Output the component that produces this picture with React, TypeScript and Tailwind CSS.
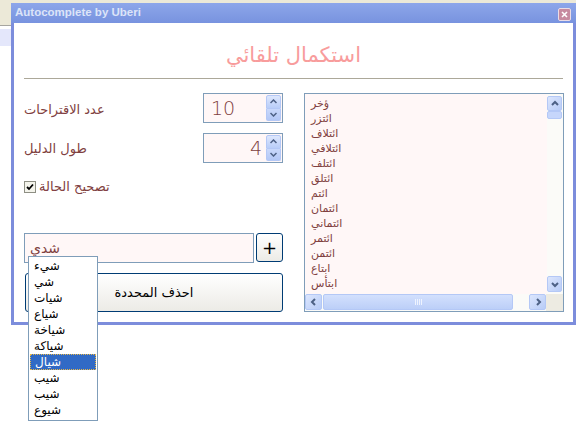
import React from 'react';

const ar = "font-['DejaVu_Sans','Noto_Sans',sans-serif]";

const listItems = [
  'ؤخر',
  'ائتزر',
  'ائتلاف',
  'ائتلافي',
  'ائتلف',
  'ائتلق',
  'ائتم',
  'ائتمان',
  'ائتماني',
  'ائتمر',
  'ائتمن',
  'ابتاع',
  'ابتأس',
];

const suggestions = ['شيء', 'شي', 'شيات', 'شياع', 'شياخة', 'شياكة', 'شيال', 'شيب', 'شيب', 'شيوع'];

function Arrow({ dir }: { dir: 'up' | 'down' | 'left' | 'right' }) {
  const d = {
    up: 'M2 6 L5 3 L8 6',
    down: 'M2 4 L5 7 L8 4',
    left: 'M6 2 L3 5 L6 8',
    right: 'M4 2 L7 5 L4 8',
  }[dir];
  return (
    <svg width="10" height="10" viewBox="0 0 10 10">
      <path d={d} fill="none" stroke="#4D6185" strokeWidth="2" />
    </svg>
  );
}

function ScrollBtn({ dir, className }: { dir: 'up' | 'down' | 'left' | 'right'; className: string }) {
  return (
    <div
      className={`flex items-center justify-center rounded-[2px] border border-[#B4C8F6] bg-gradient-to-br from-[#DCE6FD] to-[#B8CCF7] ${className}`}
    >
      <Arrow dir={dir} />
    </div>
  );
}

function SpinButtons() {
  return (
    <div className="flex flex-col w-[15px] h-[26px] my-px mr-px">
      <div className="flex-1 flex items-center justify-center rounded-t-[2px] border border-[#B4C8F6] bg-gradient-to-b from-[#DDE7FD] to-[#B9CDF8]">
        <svg width="7" height="5" viewBox="0 0 7 5">
          <path d="M0.5 4 L3.5 1 L6.5 4" fill="none" stroke="#4D6185" strokeWidth="1.5" />
        </svg>
      </div>
      <div className="flex-1 flex items-center justify-center rounded-b-[2px] border border-[#B4C8F6] border-t-0 bg-gradient-to-b from-[#C9D8FB] to-[#B3C8F6]">
        <svg width="7" height="5" viewBox="0 0 7 5">
          <path d="M0.5 1 L3.5 4 L6.5 1" fill="none" stroke="#4D6185" strokeWidth="1.5" />
        </svg>
      </div>
    </div>
  );
}

function Spin({ value, align }: { value: string; align: 'left' | 'right' }) {
  return (
    <div className="flex w-[80px] h-[30px] border border-[#7F9DB9] bg-[#FFF7F7]">
      <div
        className={`flex-1 flex items-center font-['DejaVu_Sans',sans-serif] font-extralight text-[19px] text-[#804040] ${
          align === 'left' ? 'justify-start pl-[7px]' : 'justify-end pr-[4px]'
        }`}
      >
        {value}
      </div>
      <SpinButtons />
    </div>
  );
}

export default function App() {
  return (
    <div className="relative w-[576px] h-[429px] bg-white overflow-hidden">
      {/* desktop behind the window */}
      <div className="flex flex-col">
        <div className="h-[25px] bg-[#ECE9D8]" />
        <div className="h-px bg-[#A7A6A0]" />
        <div className="h-[3px] bg-white" />
        <div className="h-[17px] bg-[#E4E7FB]" />
      </div>

      {/* window */}
      <div className="absolute left-[11px] top-[3px] w-[565px] h-[322px] flex flex-col bg-[#7C8DDC]">
        <div className="h-[20px] flex items-center justify-between pl-[4px] pr-[5px] bg-gradient-to-b from-[#8DA6EA] to-[#7893DF]">
          <span className="font-['Liberation_Sans',sans-serif] font-bold text-[11.5px] text-[#DCE4F8]">
            Autocomplete by Uberi
          </span>
          <div className="w-[13px] h-[13px] mt-[2px] flex items-center justify-center rounded-[2px] border border-[#EADCE6] bg-[#C78BA0]">
            <svg width="7" height="7" viewBox="0 0 7 7">
              <path d="M1 1 L6 6 M6 1 L1 6" stroke="#FFFFFF" strokeWidth="1.6" />
            </svg>
          </div>
        </div>

        <div className="flex-1 mx-[3px] mb-[3px] bg-white flex flex-col">
          <div className={`h-[55px] flex items-center justify-center pt-[10px] ${ar} text-[21px] text-[#F89C9C]`}>
            استكمال تلقائي
          </div>
          <div className="mx-[10px] h-px bg-[#ACA899]" />

          <div className="flex mt-[14px] pl-[10px] pr-[9px] justify-between">
            {/* left column */}
            <div className="w-[259px] flex flex-col">
              <div className="flex items-center justify-between h-[30px]">
                <span className={`${ar} text-[13px] text-[#804040] pt-[4px]`}>عدد الاقتراحات</span>
                <Spin value="10" align="left" />
              </div>
              <div className="flex items-center justify-between h-[30px] mt-[10px]">
                <span className={`${ar} text-[13px] text-[#804040] pt-[1px]`}>طول الدليل</span>
                <Spin value="4" align="right" />
              </div>
              <div className="flex items-center h-[13px] mt-[17px] gap-[3px]">
                <div className="w-[12px] h-[12px] flex items-center justify-center border border-[#8E8F84] bg-[#F4F4EC]">
                  <svg width="8" height="8" viewBox="0 0 8 8">
                    <path d="M1 4 L3 6 L7 1.5" fill="none" stroke="#000000" strokeWidth="1.8" />
                  </svg>
                </div>
                <span className={`${ar} text-[13px] text-[#804040]`}>تصحيح الحالة</span>
              </div>
              <div className="flex h-[30px] mt-[40px] gap-[2px]">
                <div className={`w-[230px] border border-[#7F9DB9] bg-[#FFF7F7] flex items-center pl-[5px] ${ar} text-[14px] text-[#804040]`}>
                  شدي
                </div>
                <div className="w-[27px] h-[29px] flex items-center justify-center rounded-[3px] border border-[#003C74] bg-gradient-to-b from-[#FFFFFF] to-[#ECEBE6] text-[18px] font-['DejaVu_Sans',sans-serif] text-black leading-none">
                  +
                </div>
              </div>
              <div
                className={`h-[39px] mt-[10px] ml-px flex items-center justify-center rounded-[3px] border border-[#003C74] bg-gradient-to-b from-[#FFFFFF] to-[#ECEBE6] ${ar} text-[13px] text-black`}
              >
                احذف المحددة
              </div>
            </div>

            {/* list box */}
            <div className="w-[260px] h-[219px] border border-[#7F9DB9] bg-[#FFF7F7] flex flex-col">
              <div className="flex h-[200px]">
                <div className={`flex-1 overflow-hidden pt-[2px] pl-[6px] ${ar} text-[11px] leading-[15px] text-[#804040]`}>
                  {listItems.map((t, i) => (
                    <div key={i} className="text-left" dir="ltr">
                      <span dir="rtl">{t}</span>
                    </div>
                  ))}
                </div>
                <div className="w-[16px] flex flex-col bg-[#FBFBF8] py-[2px] pr-px">
                  <ScrollBtn dir="up" className="h-[15px]" />
                  <div className="h-[8px] rounded-[2px] border border-[#B4C8F6] bg-[#C6D6FB]" />
                  <div className="flex-1" />
                  <ScrollBtn dir="down" className="h-[16px]" />
                </div>
              </div>
              <div className="flex h-[17px]">
                <div className="flex-1 flex bg-[#FBFBF8] pb-px gap-px">
                  <ScrollBtn dir="left" className="w-[17px]" />
                  <div className="w-[190px] flex items-center justify-center rounded-[2px] border border-[#B4C8F6] bg-gradient-to-b from-[#D3E0FD] to-[#BCCFF8]">
                    <div className="flex gap-px">
                      <div className="w-px h-[6px] bg-[#EEF3FE]" />
                      <div className="w-px h-[6px] bg-[#EEF3FE]" />
                      <div className="w-px h-[6px] bg-[#EEF3FE]" />
                      <div className="w-px h-[6px] bg-[#EEF3FE]" />
                    </div>
                  </div>
                  <div className="flex-1" />
                  <ScrollBtn dir="right" className="w-[17px]" />
                </div>
                <div className="w-[17px] bg-[#EDEBE2]" />
              </div>
            </div>
          </div>
        </div>
      </div>

      {/* autocomplete popup */}
      <div className="absolute left-[28px] top-[256px] w-[70px] h-[165px] border border-[#7F9DB9] bg-white py-px px-px">
        {suggestions.map((s, i) => (
          <div
            key={i}
            className={`h-[16px] flex items-center pl-[4px] ${ar} text-[12px] ${
              i === 6 ? 'bg-[#316AC5] text-white border border-dotted border-[#E8B848]' : 'text-black'
            }`}
          >
            <span dir="rtl">{s}</span>
          </div>
        ))}
      </div>
    </div>
  );
}
